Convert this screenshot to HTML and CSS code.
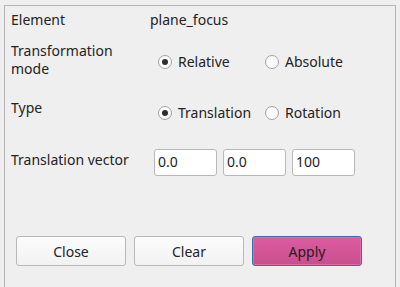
FILE: index.html
```html
<!DOCTYPE html>
<html>
<head>
<meta charset="utf-8">
<link rel="stylesheet" href="styles.css">
</head>
<body>
<div class="frame">
  <div class="row row-element">
    <div class="label">Element</div>
    <div class="value">plane_focus</div>
  </div>
  <div class="row row-mode">
    <div class="label">Transformation<br>mode</div>
    <div class="radios">
      <div class="opt"><span class="radio checked"></span><span>Relative</span></div>
      <div class="opt"><span class="radio"></span><span>Absolute</span></div>
    </div>
  </div>
  <div class="row row-type">
    <div class="label">Type</div>
    <div class="radios">
      <div class="opt"><span class="radio checked"></span><span>Translation</span></div>
      <div class="opt"><span class="radio"></span><span>Rotation</span></div>
    </div>
  </div>
  <div class="row row-vector">
    <div class="label">Translation vector</div>
    <div class="inputs">
      <div class="input">0.0</div>
      <div class="input">0.0</div>
      <div class="input">100</div>
    </div>
  </div>
  <div class="buttons">
    <div class="btn">Close</div>
    <div class="btn">Clear</div>
    <div class="btn primary">Apply</div>
  </div>
</div>
</body>
</html>
```

FILE: styles.css
```css
html, body {
  margin: 0;
  padding: 0;
  background: #efefef;
  overflow: hidden;
}
body {
  font-family: "Noto Sans", "DejaVu Sans", sans-serif;
  font-size: 14px;
  line-height: 17px;
  color: #232323;
  width: 400px;
  height: 287px;
}
.frame {
  margin: 5px 4px 0 4px;
  height: 282px;
  border: 1px solid #b4b4b4;
  border-bottom: none;
  padding: 5px 0 0 6px;
  box-sizing: border-box;
}
.row {
  display: flex;
  align-items: flex-start;
}
.label {
  width: 139px;
  flex: none;
}
.row-element {
  height: 32px;
}
.row-mode {
  height: 56px;
}
.row-mode .label {
  line-height: 18px;
  margin-top: -1px;
}
.row-mode .radios {
  margin-top: 10px;
}
.row-type {
  height: 50px;
}
.row-type .radios {
  margin-top: 5px;
}
.radios {
  display: flex;
  margin-left: 8px;
}
.opt {
  width: 107px;
  display: flex;
  align-items: center;
  gap: 6px;
}
.radio {
  width: 14px;
  height: 14px;
  box-sizing: border-box;
  border: 1px solid #a2a2a2;
  border-radius: 50%;
  background: #fcfcfc;
  display: flex;
  align-items: center;
  justify-content: center;
}
.radio.checked::after {
  content: "";
  width: 6px;
  height: 6px;
  border-radius: 50%;
  background: #2e2e2e;
}
.row-vector .label {
  margin-top: 2px;
}
.inputs {
  display: flex;
  gap: 6px;
  margin-left: 4px;
}
.input {
  width: 63px;
  height: 27px;
  box-sizing: border-box;
  border: 1px solid #b8b8b8;
  border-radius: 3px;
  background: #fff;
  padding: 3px 0 0 3px;
}
.buttons {
  display: flex;
  gap: 8px;
  margin-top: 60px;
  margin-left: 5px;
}
.btn {
  width: 110px;
  height: 30px;
  box-sizing: border-box;
  border: 1px solid #b8b8b8;
  border-radius: 3px;
  background: linear-gradient(#fcfcfc, #f2f2f2);
  display: flex;
  align-items: center;
  justify-content: center;
}
.btn.primary {
  border: 1px solid #3a6ea5;
  box-shadow: inset 0 0 0 1px #e36aa8;
  background: linear-gradient(#dc5ca1, #c74f8e);
  color: #2a1a22;
}
```
